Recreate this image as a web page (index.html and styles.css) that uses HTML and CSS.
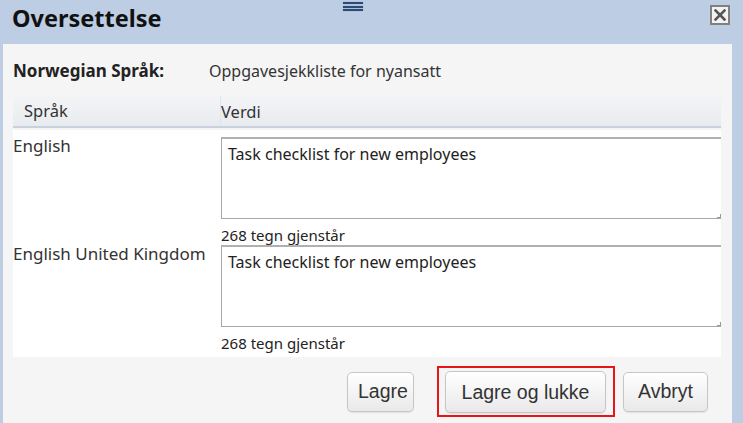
FILE: index.html
```html
<!DOCTYPE html>
<html lang="no">
<head>
<meta charset="utf-8">
<title>Oversettelse</title>
<link rel="stylesheet" href="styles.css">
</head>
<body>
<div class="dialog">
  <div class="titlebar">
    <h1 class="title">Oversettelse</h1>
    <span class="handle"><i></i><i></i><i></i></span>
    <button class="close" aria-label="Lukk">
      <svg width="12" height="12" viewBox="0 0 12 12"><path d="M1.5 1.5 L10.5 10.5 M10.5 1.5 L1.5 10.5" stroke="#555" stroke-width="2.6" stroke-linecap="square"/></svg>
    </button>
  </div>
  <div class="panel">
    <div class="meta">
      <span class="meta-label">Norwegian Språk:</span>
      <span class="meta-value">Oppgavesjekkliste for nyansatt</span>
    </div>
    <div class="grid">
      <div class="grid-head">
        <div class="col-lang">Språk</div>
        <div class="col-val">Verdi</div>
      </div>
      <div class="grid-body">
        <div class="row">
          <div class="lang">English</div>
          <div class="val">
            <div class="ta">Task checklist for new employees<span class="grip"></span></div>
            <div class="count">268 tegn gjenstår</div>
          </div>
        </div>
        <div class="row">
          <div class="lang">English United Kingdom</div>
          <div class="val">
            <div class="ta">Task checklist for new employees<span class="grip"></span></div>
            <div class="count">268 tegn gjenstår</div>
          </div>
        </div>
      </div>
    </div>
    <div class="actions">
      <button class="btn btn-save">Lagre</button>
      <div class="highlight"><button class="btn btn-wide">Lagre og lukke</button></div>
      <button class="btn btn-cancel">Avbryt</button>
    </div>
  </div>
</div>
</body>
</html>
```

FILE: styles.css
```css
html, body {
  margin: 0;
  padding: 0;
}
body {
  width: 743px;
  height: 423px;
  overflow: hidden;
  background: #bccde4;
  font-family: "Noto Sans", "Open Sans", sans-serif;
  color: #333;
}
.dialog {
  width: 743px;
  height: 423px;
  display: flex;
  flex-direction: column;
}
.titlebar {
  height: 44px;
  flex: none;
  position: relative;
  display: flex;
  align-items: flex-start;
  justify-content: space-between;
  padding: 0 13px 0 12px;
  box-sizing: border-box;
}
.title {
  margin: 0;
  padding-top: 2px;
  font-size: 23.5px;
  font-weight: 700;
  color: #111;
  line-height: 32px;
}
.handle {
  position: absolute;
  left: 343px;
  top: 2px;
  width: 20px;
  height: 9px;
  display: flex;
  flex-direction: column;
  justify-content: space-between;
}
.handle i {
  display: block;
  height: 2px;
  background: #2c4a72;
  box-shadow: 0 0 1px #6a86ad;
}
.close {
  margin-top: 5px;
  width: 20px;
  height: 20px;
  padding: 0;
  border: 2px solid #808080;
  background: #f2f2f2;
  display: flex;
  align-items: center;
  justify-content: center;
  box-sizing: border-box;
}
.panel {
  margin-left: 3px;
  width: 729px;
  flex: 1;
  background: #f5f5f5;
  padding: 0 11px 0 10px;
  box-sizing: border-box;
  display: flex;
  flex-direction: column;
}
.meta {
  height: 52px;
  display: flex;
  align-items: center;
  font-size: 16px;
  padding-top: 1px;
  box-sizing: border-box;
}
.meta-label {
  width: 196px;
  font-weight: 700;
  font-size: 17px;
  color: #222;
}
.meta-value {
  color: #333;
}
.grid-head {
  height: 30px;
  display: flex;
  align-items: center;
  background: linear-gradient(#f3f4f6, #e8ebef);
  border-bottom: 2px solid #c9d1dc;
  font-size: 16.5px;
  color: #333;
}
.col-lang {
  width: 208px;
  padding-left: 11px;
  box-sizing: border-box;
  border-right: 1px solid #e2e5ea;
  line-height: 30px;
}
.grid-body {
  margin-top: 2px;
  background: #fff;
  padding-top: 7px;
  padding-bottom: 4px;
}
.row {
  display: flex;
}
.lang {
  width: 208px;
  font-size: 17px;
  line-height: 20px;
  color: #333;
  margin-top: -1px;
}
.val {
  flex: 1;
}
.ta {
  position: relative;
  height: 82px;
  border: 1px solid #a8a8a8;
  border-top: 2px solid #b0b0b0;
  border-right: none;
  box-sizing: border-box;
  padding: 5px 6px;
  font-size: 16px;
  line-height: 20px;
  color: #222;
  background: #fff;
}
.grip {
  position: absolute;
  right: 0;
  bottom: 0;
  width: 3px;
  height: 3px;
  border-right: 1px solid #999;
  border-bottom: 1px solid #999;
}
.count {
  font-size: 15px;
  line-height: 18px;
  padding-top: 7px;
  color: #222;
  height: 26px;
  box-sizing: border-box;
}
.actions {
  display: flex;
  justify-content: flex-end;
  align-items: center;
  padding-top: 9px;
  padding-right: 13px;
}
.btn {
  font-family: "Liberation Sans", Arial, sans-serif;
  font-size: 19.5px;
  color: #333;
  height: 40px;
  border: 1px solid #c6c6c6;
  border-radius: 5px;
  background: linear-gradient(#ffffff, #e9e9e9);
  box-shadow: 0 1px 1px rgba(0,0,0,0.08);
  padding: 0 10px;
}
.btn-save {
  width: 67px;
}
.highlight {
  margin-left: 23px;
  border: 2px solid #e8141c;
  padding: 3px 7px 2px 6px;
  height: 51px;
  box-sizing: border-box;
}
.btn-wide {
  width: 161px;
  height: 42px;
}
.btn-cancel {
  width: 85px;
  margin-left: 8px;
}
```
